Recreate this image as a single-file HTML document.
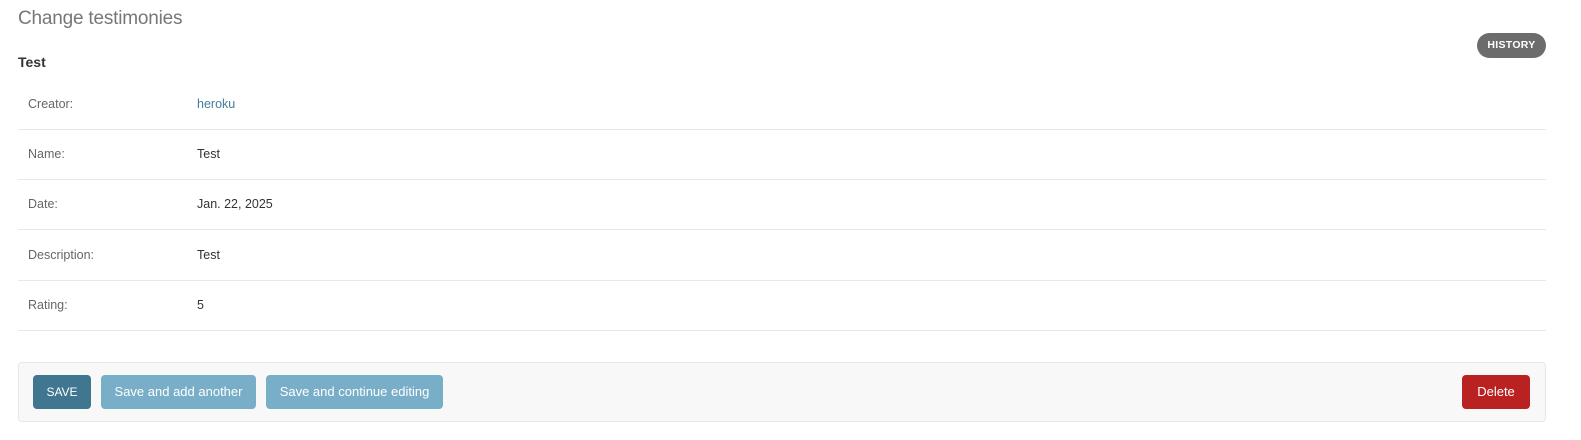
<!DOCTYPE html>
<html><head><style>
body{margin:0;background:#fff;font-family:"Liberation Sans",sans-serif;color:#333;width:1581px;height:440px;position:relative;overflow:hidden}
h1{position:absolute;left:18px;top:8px;margin:0;font-size:19px;font-weight:normal;color:#777;letter-spacing:-0.2px}
h2{position:absolute;left:18px;top:54px;margin:0;font-size:14px;font-weight:bold;color:#333}
.hist{position:absolute;left:1477px;top:33px;width:69px;height:25px;border-radius:13px;background:#6c6c6c;color:#fff;font-size:10.5px;font-weight:bold;text-align:center;line-height:25px;letter-spacing:.3px}
.row{position:absolute;left:18px;width:1528px;height:50px;border-bottom:1px solid #e8e8e8;font-size:12.5px}
.row .l{position:absolute;left:10px;top:18px;color:#666}
.row .v{position:absolute;left:179px;top:18px;color:#333}
.sub{position:absolute;left:18px;top:362px;width:1526px;height:58px;background:#f8f8f8;border:1px solid #e6e6e6;border-radius:4px}
.b{position:absolute;top:12px;height:34px;line-height:34px;border-radius:4px;color:#fff;font-size:13px;text-align:center}
</style></head><body>
<h1>Change testimonies</h1>
<h2>Test</h2>
<div class="hist">HISTORY</div>
<div class="row" style="top:79px"><span class="l">Creator:</span><span class="v" style="color:#447e9b">heroku</span></div>
<div class="row" style="top:129px"><span class="l">Name:</span><span class="v">Test</span></div>
<div class="row" style="top:179px"><span class="l">Date:</span><span class="v">Jan. 22, 2025</span></div>
<div class="row" style="top:230px"><span class="l">Description:</span><span class="v">Test</span></div>
<div class="row" style="top:280px"><span class="l">Rating:</span><span class="v">5</span></div>
<div class="sub">
<div class="b" style="left:14px;width:58px;background:#417690;font-size:12px">SAVE</div>
<div class="b" style="left:82px;width:155px;background:#79aec8">Save and add another</div>
<div class="b" style="left:247px;width:177px;background:#79aec8">Save and continue editing</div>
<div class="b" style="left:1443px;width:68px;background:#ba2121">Delete</div>
</div>
</body></html>
